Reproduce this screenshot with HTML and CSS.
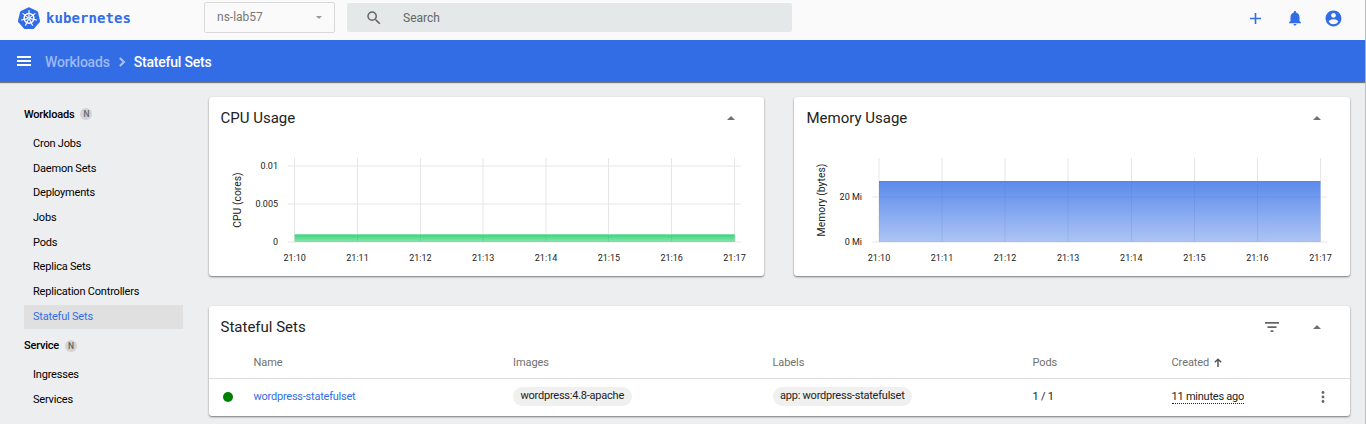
FILE: index.html
```html
<!DOCTYPE html>
<html lang="en">
<head>
<meta charset="utf-8">
<title>Kubernetes Dashboard</title>
<link rel="stylesheet" href="styles.css">
</head>
<body>
<div class="app">
  <header class="topbar">
    <div class="brand">
      <svg class="brand-logo" viewBox="0 0 22 22" width="22" height="22">
        <path d="M11 .2 19.1 4.1Q19.8 4.5 20 5.2L22 13.8Q22.1 14.6 21.6 15.2L16.1 21.5Q15.6 22 14.9 22H7.1Q6.400 22 5.900 21.500L.4 15.200Q-.1 14.600 0 13.800L2 5.200Q2.200 4.500 2.900 4.100L10.200.4Q10.600.2 11 .2Z" fill="#326de6"/>
        <g fill="none" stroke="#fff" stroke-linecap="round">
          <circle cx="11" cy="11.300" r="4.900" stroke-width="1.500"/>
          <circle cx="11" cy="11.300" r="1" stroke-width=".9"/>
          <path stroke-width="1.150" d="M11 9.800V3.600M12.200 10.400 17 6.600M12.500 11.600 18.500 13M11.700 12.700 14.400 18.300M10.300 12.700 7.600 18.300M9.500 11.600 3.500 13M9.800 10.400 5 6.600"/>
        </g>
      </svg>
      <span class="brand-name">kubernetes</span>
    </div>
    <div class="namespace"><span>ns-lab57</span><i class="caret-down"></i></div>
    <div class="search">
      <svg viewBox="0 0 24 24" width="18" height="18"><path fill="#666" d="M15.500 14h-.79l-.28-.27A6.471 6.471 0 0 0 16 9.500 6.500 6.500 0 1 0 9.500 16c1.610 0 3.090-.59 4.230-1.570l.27.28v.79l5 4.990L20.490 19l-4.990-5zm-6 0C7.010 14 5 11.990 5 9.500S7.010 5 9.500 5 14 7.010 14 9.500 11.990 14 9.500 14z"/></svg>
      <span>Search</span>
    </div>
    <div class="actions">
      <svg viewBox="0 0 24 24" width="19" height="19"><path d="M19 13h-6v6h-2v-6H5v-2h6V5h2v6h6v2z"/></svg>
      <svg viewBox="0 0 24 24" width="18" height="18"><path d="M12 22c1.100 0 2-.9 2-2h-4a2 2 0 0 0 2 2zm6-6v-5c0-3.070-1.640-5.640-4.500-6.320V4c0-.83-.67-1.500-1.500-1.500s-1.500.67-1.500 1.500v.68C7.630 5.360 6 7.920 6 11v5l-2 2v1h16v-1l-2-2z"/></svg>
      <svg viewBox="0 0 24 24" width="19" height="19"><path d="M12 2C6.480 2 2 6.480 2 12s4.480 10 10 10 10-4.480 10-10S17.520 2 12 2zm0 3c1.660 0 3 1.340 3 3s-1.340 3-3 3-3-1.340-3-3 1.340-3 3-3zm0 14.200a7.200 7.200 0 0 1-6-3.220c.03-1.990 4-3.080 6-3.080 1.990 0 5.970 1.090 6 3.080a7.200 7.200 0 0 1-6 3.220z"/></svg>
    </div>
  </header>

  <nav class="crumbs">
    <div class="menu"><i></i><i></i><i></i></div>
    <span class="crumb-parent">Workloads</span>
    <svg class="crumb-sep" viewBox="0 0 8 10" width="8" height="10"><path d="M1.800 1 6 5 1.800 9" fill="none" stroke="#adc5f5" stroke-width="1.900"/></svg>
    <span class="crumb-current">Stateful Sets</span>
  </nav>

  <div class="body">
    <aside class="side">
      <div class="group">Workloads<span class="badge">N</span></div>
      <a class="item">Cron Jobs</a>
      <a class="item">Daemon Sets</a>
      <a class="item">Deployments</a>
      <a class="item">Jobs</a>
      <a class="item">Pods</a>
      <a class="item">Replica Sets</a>
      <a class="item">Replication Controllers</a>
      <a class="item active">Stateful Sets</a>
      <div class="group second">Service<span class="badge">N</span></div>
      <a class="item">Ingresses</a>
      <a class="item">Services</a>
    </aside>

    <main class="content">
      <div class="charts">
        <section class="card chart-card">
          <div class="card-head"><h2>CPU Usage</h2><i class="caret-up"></i></div>
          <svg class="chart" viewBox="209 139 555 137" width="555" height="137">
            <defs><linearGradient id="cpu" x1="0" y1="0" x2="0" y2="1"><stop offset="0" stop-color="#00c752" stop-opacity=".8"/><stop offset="1" stop-color="#00c752" stop-opacity=".45"/></linearGradient></defs>
            <path class="grid" d="M288 166H741M288 204H741M288 242H741M294.500 158V242M357.500 158V242M420.500 158V242M483 158V242M546 158V242M608.500 158V242M671.500 158V242M734.500 158V242"/>
            <rect x="294.700" y="234" width="440" height="8" fill="url(#cpu)"/>
            <path d="M294.700 234.500H734.700" stroke="#fff" stroke-opacity=".35"/>
            <g class="tick end"><text x="278" y="169">0.01</text><text x="278" y="207">0.005</text><text x="278" y="245">0</text></g>
            <g class="tick mid"><text x="294.700" y="261">21:10</text><text x="357.500" y="261">21:11</text><text x="420.400" y="261">21:12</text><text x="483.200" y="261">21:13</text><text x="546" y="261">21:14</text><text x="608.900" y="261">21:15</text><text x="671.700" y="261">21:16</text><text x="734.500" y="261">21:17</text></g>
            <text class="axis" transform="translate(240.500 200) rotate(-90)">CPU (cores)</text>
          </svg>
        </section>
        <section class="card chart-card">
          <div class="card-head memory"><h2>Memory Usage</h2><i class="caret-up"></i></div>
          <svg class="chart" viewBox="794 139 556 137" width="556" height="137">
            <defs><linearGradient id="mem" x1="0" y1="0" x2="0" y2="1"><stop offset="0" stop-color="#326de6" stop-opacity=".8"/><stop offset="1" stop-color="#326de6" stop-opacity=".4"/></linearGradient></defs>
            <path class="grid" d="M872.500 197H1327M872.500 242H1327M879 158V242M942 158V242M1005 158V242M1068 158V242M1131.500 158V242M1194.500 158V242M1257.500 158V242M1320.500 158V242"/>
            <rect x="879" y="181" width="441.500" height="61" fill="url(#mem)"/>
            <path d="M879 181.500H1320.500" stroke="#326de6" stroke-opacity=".15"/>
            <g class="tick end"><text x="862" y="200">20 Mi</text><text x="862" y="245">0 Mi</text></g>
            <g class="tick mid"><text x="879" y="261">21:10</text><text x="942" y="261">21:11</text><text x="1005" y="261">21:12</text><text x="1068.200" y="261">21:13</text><text x="1131.300" y="261">21:14</text><text x="1194.400" y="261">21:15</text><text x="1257.400" y="261">21:16</text><text x="1320.500" y="261">21:17</text></g>
            <text class="axis" transform="translate(825 200) rotate(-90)">Memory (bytes)</text>
          </svg>
        </section>
      </div>

      <section class="card list-card">
        <div class="card-head">
          <h2>Stateful Sets</h2>
          <svg class="filter" viewBox="0 0 14 10" width="14" height="10"><path d="M0 0H14V1.700H0ZM2.500 4.200H11.500V5.900H2.500ZM5.600 8.300H8.400V10H5.600Z" fill="#666"/></svg>
          <i class="caret-up"></i>
        </div>
        <div class="row head">
          <span></span><span>Name</span><span>Images</span><span>Labels</span><span>Pods</span>
          <span class="created">Created<svg viewBox="0 0 8 9" width="8" height="9"><path d="M4 9V1.300M.8 4.300 4 1.200 7.200 4.300" fill="none" stroke="#555" stroke-width="1.500"/></svg></span><span></span>
        </div>
        <div class="row data">
          <span><i class="status"></i></span>
          <span><a class="link">wordpress-statefulset</a></span>
          <span><b class="chip">wordpress:4.8-apache</b></span>
          <span><b class="chip">app: wordpress-statefulset</b></span>
          <span>1 / 1</span>
          <span><em class="ago">11 minutes ago</em></span>
          <span><svg class="more" viewBox="0 0 4 12" width="4" height="12"><g fill="#666"><circle cx="2" cy="1.500" r="1.400"/><circle cx="2" cy="6" r="1.400"/><circle cx="2" cy="10.500" r="1.400"/></g></svg></span>
        </div>
      </section>
    </main>
  </div>
</div>
</body>
</html>
```
FILE: styles.css
```css
* { box-sizing: border-box; }
body {
  margin: 0;
  background: #edeef0;
  font-family: Roboto, "Liberation Sans", sans-serif;
  font-size: 11px;
  color: #222;
  overflow: hidden;
}
.app { height: 424px; border-right: 1px solid #bfc0c2; }

.topbar { display: flex; height: 40px; background: #fafafa; }
.brand { display: flex; width: 204px; padding: 7px 0 0 18px; }
.brand-logo { flex: none; }
.brand-name {
  margin-left: 6px;
  font: 700 14px/23px "DejaVu Sans Mono", monospace;
  letter-spacing: .08px;
  color: #326de6;
}
.namespace {
  display: flex;
  align-items: center;
  justify-content: space-between;
  width: 131px;
  height: 31px;
  margin-top: 2px;
  padding: 0 12px 2px;
  border: 1px solid #d9d9d9;
  border-radius: 2px;
  font-size: 12px;
  color: #777;
}
.caret-down { margin-top: 2px; border: 3.5px solid transparent; border-top-color: #999; border-bottom: 0; }
.search {
  display: flex;
  align-items: center;
  width: 445px;
  height: 29px;
  margin: 3px 0 0 12px;
  padding-left: 18px;
  border-radius: 2px;
  background: #e4e8e8;
  font-size: 12px;
  color: #666;
}
.search span { margin-left: 20px; }
.actions {
  display: flex;
  align-items: center;
  gap: 20.5px;
  margin-left: auto;
  padding: 0 22px 4px 0;
  fill: #326de6;
}

.crumbs {
  position: relative;
  display: flex;
  align-items: center;
  height: 42px;
  padding: 2px 0 0 17px;
  background: #326de6;
  box-shadow: 0 1px 1px rgba(0, 0, 0, .5);
  font-size: 14px;
  font-weight: 500;
  letter-spacing: -.2px;
  color: #fff;
}
.menu { display: flex; flex-direction: column; gap: 2px; width: 14px; margin: 0 14px 2px 0; }
.menu i { height: 2px; background: #fff; }
.crumb-parent { color: #9db9f4; }
.crumb-sep { margin: 0 8px; }

.body { display: flex; }
.side { width: 183px; padding: 21px 0 0 24px; color: #000; letter-spacing: -.2px; }
.group { display: flex; align-items: center; height: 22px; font-weight: 500; }
.group + .item { margin-top: 7px; }
.group.second { margin-top: 6px; }
.group.second + .item { margin-top: 6px; }
.badge {
  width: 12px;
  height: 12px;
  margin-left: 6px;
  border-radius: 50%;
  background: #d2d3d4;
  font: 500 8.5px/12px Roboto, sans-serif;
  letter-spacing: 0;
  color: #666;
  text-align: center;
}
.item { display: block; height: 24px; margin-bottom: .7px; padding-left: 9px; line-height: 24px; }
.item.active { background: #e0e0e0; color: #326de6; line-height: 23px; }

.content { flex: 1; padding: 15px 15px 0 26px; }
.card { background: #fff; border-radius: 3px; box-shadow: 0 1px 2px rgba(0, 0, 0, .5); }
.charts { display: grid; grid-template-columns: 555px 556px; gap: 30px; }
.chart-card { height: 179px; }
.card-head { display: flex; align-items: center; height: 42px; padding: 0 29px 0 11.5px; }
.card-head.memory { padding-left: 12.5px; }
.card-head h2 { flex: 1; margin: 0; font-size: 15px; font-weight: 400; }
.caret-up { border: 4px solid transparent; border-bottom-color: #707070; border-top: 0; }
.chart { display: block; }
.grid { fill: none; stroke: #e6e6e6; }
.tick { font-size: 9px; fill: #222; }
.end { text-anchor: end; }
.mid { text-anchor: middle; }
.axis { font-size: 10.4px; fill: #222; text-anchor: middle; }

.list-card { height: 110px; margin-top: 30px; }
.filter { margin-right: 34px; }
.row {
  display: grid;
  grid-template-columns: 30.5px 259.5px 259.5px 260px 139px 146px 1fr;
  align-items: center;
  padding-left: 14px;
}
.head { height: 31px; padding-bottom: 2px; border-bottom: 1px solid #ddd; color: #707070; letter-spacing: -.08px; }
.data { height: 36px; padding-bottom: 1px; letter-spacing: -.23px; }
.created svg { margin-left: 5px; vertical-align: -1px; }
.status { display: block; width: 10px; height: 10px; border-radius: 50%; background: #008000; }
.link { color: #326de6; }
.chip { display: inline-block; height: 19px; padding: 0 7.5px; border-radius: 10px; background: #f0f0f0; font-weight: 400; line-height: 18px; }
.ago { font-style: normal; border-bottom: 1px dotted #222; }
.more { display: block; margin-left: 3px; }
```
